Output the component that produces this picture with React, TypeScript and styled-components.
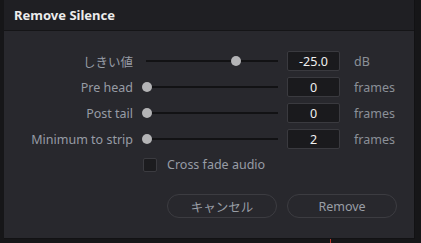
import React from 'react';
import styled, { createGlobalStyle } from 'styled-components';

const GlobalStyle = createGlobalStyle`
  html, body {
    margin: 0;
    padding: 0;
    background: #171719;
    font-family: "Noto Sans", "Noto Sans CJK JP", sans-serif;
  }
`;

const Screen = styled.div`
  width: 421px;
  height: 243px;
  overflow: hidden;
  position: relative;
  background: #161618;
`;

const Dialog = styled.div`
  margin-left: 4px;
  width: 411px;
  height: 239px;
  display: flex;
  flex-direction: column;
  background: #28282d;
  border-right: 1px solid #121214;
  border-bottom: 1px solid #121214;
  box-sizing: border-box;
`;

const TitleBar = styled.div`
  height: 31px;
  flex-shrink: 0;
  display: flex;
  align-items: center;
  padding-left: 10px;
  background: #1f1f23;
  border-bottom: 1px solid #151517;
  box-sizing: border-box;
`;

const Title = styled.h1`
  margin: 0;
  font-size: 13px;
  font-weight: 700;
  color: #ececec;
`;

const Body = styled.div`
  padding-top: 20px;
  display: flex;
  flex-direction: column;
`;

const Rows = styled.div`
  display: grid;
  grid-template-columns: 129px 132px 53px auto;
  row-gap: 6px;
  align-items: center;
`;

const Label = styled.div`
  text-align: right;
  font-size: 12.5px;
  color: #979ca5;
  white-space: nowrap;
`;

const Track = styled.div`
  position: relative;
  margin-left: 13px;
  width: 132px;
  height: 2px;
  background: #121214;
`;

const Thumb = styled.div`
  position: absolute;
  top: -4px;
  width: 10px;
  height: 10px;
  border-radius: 50%;
  background: #b4b4b6;
`;

const ValueBox = styled.div`
  margin-left: 22px;
  width: 53px;
  height: 20px;
  box-sizing: border-box;
  display: flex;
  align-items: center;
  justify-content: center;
  background: #1a1a1d;
  border: 1px solid #3a3a3f;
  border-radius: 2px;
  font-size: 12.5px;
  color: #f0f0f0;
`;

const Unit = styled.div`
  margin-left: 36px;
  font-size: 12.5px;
  color: #8b9098;
`;

const CheckRow = styled.label`
  margin-top: 7px;
  margin-left: 139px;
  display: flex;
  align-items: center;
  gap: 10px;
  font-size: 12.5px;
  color: #979ca5;
`;

const Box = styled.span`
  width: 14px;
  height: 14px;
  box-sizing: border-box;
  background: #1c1c1f;
  border: 1px solid #3b3b40;
  border-radius: 2px;
`;

const Buttons = styled.div`
  margin-top: 21px;
  margin-left: 163px;
  display: flex;
  gap: 10px;
`;

const Button = styled.button`
  width: 110px;
  height: 24px;
  border-radius: 12px;
  border: 1px solid #3c3c41;
  background: transparent;
  color: #999ea6;
  font-family: "Noto Sans", "Noto Sans CJK JP", sans-serif;
  font-size: 12.5px;
  padding: 0;
`;

const Marker = styled.div`
  position: absolute;
  left: 330px;
  bottom: 0;
  width: 1px;
  height: 4px;
  background: #c0392b;
`;

type Setting = { label: string; pos: number; value: string; unit: string };

const settings: Setting[] = [
  { label: 'しきい値', pos: 0.73, value: '-25.0', unit: 'dB' },
  { label: 'Pre head', pos: 0, value: '0', unit: 'frames' },
  { label: 'Post tail', pos: 0, value: '0', unit: 'frames' },
  { label: 'Minimum to strip', pos: 0, value: '2', unit: 'frames' },
];

export default function App() {
  return (
    <Screen>
      <GlobalStyle />
      <Dialog>
        <TitleBar>
          <Title>Remove Silence</Title>
        </TitleBar>
        <Body>
          <Rows>
            {settings.map((s) => (
              <React.Fragment key={s.label}>
                <Label>{s.label}</Label>
                <Track>
                  <Thumb style={{ left: `${s.pos * 122 - 4}px` }} />
                </Track>
                <ValueBox>{s.value}</ValueBox>
                <Unit>{s.unit}</Unit>
              </React.Fragment>
            ))}
          </Rows>
          <CheckRow>
            <Box />
            Cross fade audio
          </CheckRow>
          <Buttons>
            <Button>キャンセル</Button>
            <Button>Remove</Button>
          </Buttons>
        </Body>
      </Dialog>
      <Marker />
    </Screen>
  );
}
